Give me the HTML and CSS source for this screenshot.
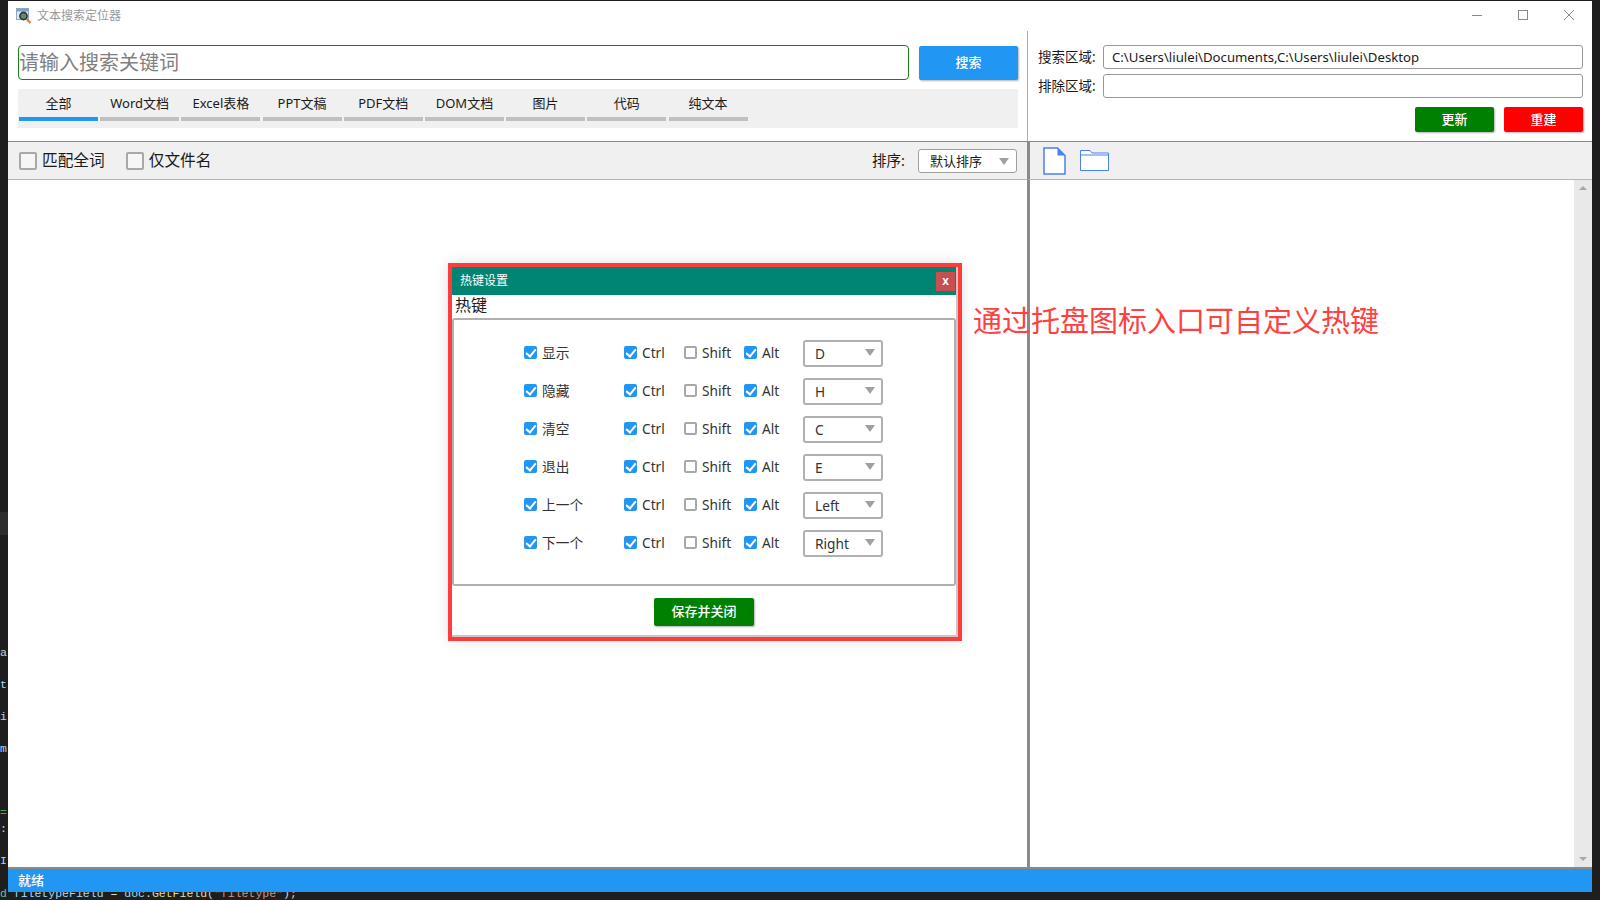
FILE: index.html
```html
<!DOCTYPE html>
<html lang="zh-CN">
<head>
    <meta charset="UTF-8">
    <meta name="viewport" content="width=device-width, initial-scale=1.0">
    <title>文本搜索定位器</title>
    <link rel="stylesheet" href="styles.css">
</head>
<body>
  <!-- editor behind the window -->
  <pre class="editor-edge"><span class="c-light">a</span>

<span class="c-blue">t</span>

<span class="c-blue">i</span>

<span class="c-blue">m</span>



<span class="c-green">=</span>
<span class="c-light">:</span>

<span class="c-blue">I</span></pre>
  <div class="editor-band"></div>
  <pre class="editor-line"><span class="c-teal">d</span> <span class="c-blue">filetypeField</span> <span class="c-light">=</span> <span class="c-blue">doc</span><span class="c-light">.</span><span class="c-yellow">GetField</span><span class="c-light">(</span><span class="c-orange">"filetype"</span><span class="c-light">);</span></pre>

  <div class="window">
    <div class="titlebar">
      <svg class="app-icon" width="16" height="16" viewBox="0 0 16 16">
        <rect x="0.5" y="0.5" width="12" height="11" fill="#dfe9f2" stroke="#8fa9c0"/>
        <rect x="0.5" y="0.5" width="12" height="3" fill="#7fa6c9"/>
        <circle cx="7.5" cy="8" r="3.6" fill="#5a8a78" stroke="#333" stroke-width="1.6"/>
        <path d="M10.5 11 L14.5 15" stroke="#e8772e" stroke-width="2.2"/>
      </svg>
      <span class="title-text">文本搜索定位器</span>
      <div class="win-controls">
        <svg width="12" height="12" viewBox="0 0 12 12"><path d="M1 6.5H11" stroke="#8a8a8a"/></svg>
        <svg width="12" height="12" viewBox="0 0 12 12"><rect x="1.5" y="1.5" width="9" height="9" fill="none" stroke="#8a8a8a"/></svg>
        <svg width="12" height="12" viewBox="0 0 12 12"><path d="M1 1L11 11M11 1L1 11" stroke="#8a8a8a"/></svg>
      </div>
    </div>

    <div class="panels">
      <div class="left-panel">
        <div class="left-head">
          <div class="search-row">
            <input class="search-input" type="text" placeholder="请输入搜索关键词">
            <button class="btn btn-blue search-btn">搜索</button>
          </div>
          <div class="tabs">
            <div class="tab active">全部</div>
            <div class="tab">Word文档</div>
            <div class="tab">Excel表格</div>
            <div class="tab">PPT文稿</div>
            <div class="tab">PDF文档</div>
            <div class="tab">DOM文档</div>
            <div class="tab">图片</div>
            <div class="tab">代码</div>
            <div class="tab">纯文本</div>
          </div>
        </div>
        <div class="toolbar">
          <label class="big-check"><input type="checkbox"><span>匹配全词</span></label>
          <label class="big-check"><input type="checkbox"><span>仅文件名</span></label>
          <span class="sort-label">排序:</span>
          <div class="sort-select"><span>默认排序</span></div>
        </div>
        <div class="results"></div>
      </div>

      <div class="right-panel">
        <div class="right-head">
          <div class="area-grid">
            <label>搜索区域:</label>
            <input class="area-input" type="text" value="C:\Users\liulei\Documents,C:\Users\liulei\Desktop">
            <label>排除区域:</label>
            <input class="area-input" type="text">
          </div>
          <div class="action-row">
            <button class="btn btn-green">更新</button>
            <button class="btn btn-red">重建</button>
          </div>
        </div>
        <div class="toolbar preview-bar">
          <svg width="23" height="28" viewBox="0 0 23 28">
            <path d="M1 1H14.5L22 8.5V27H1Z" fill="#fff" stroke="#4a80f0" stroke-width="1.5"/>
            <path d="M14.5 1V8.5H22Z" fill="#4a80f0"/>
          </svg>
          <svg width="29" height="21" viewBox="0 0 29 21">
            <path d="M0.5 20.5V0.5H10L12 3H28.5V20.5Z M0.5 5H28.5" fill="#fff" stroke="#4a80f0"/>
          </svg>
        </div>
        <div class="preview">
          <div class="preview-text"></div>
          <div class="scrollbar">
            <i class="arrow-up"></i>
            <i class="arrow-down"></i>
          </div>
        </div>
      </div>
    </div>

    <div class="statusbar">就绪</div>

    <!-- hotkey dialog, with the red frame around it -->
    <div class="dialog-frame">
      <div class="dialog">
        <div class="dialog-title">
          <span>热键设置</span>
          <div class="dialog-close">x</div>
        </div>
        <div class="group-label">热键</div>
        <div class="group-box">
          <div class="hotkey-row">
            <label class="hk-check"><input type="checkbox" checked>显示</label>
            <label class="hk-check"><input type="checkbox" checked>Ctrl</label>
            <label class="hk-check"><input type="checkbox">Shift</label>
            <label class="hk-check"><input type="checkbox" checked>Alt</label>
            <div class="combo"><span>D</span></div>
          </div>
          <div class="hotkey-row">
            <label class="hk-check"><input type="checkbox" checked>隐藏</label>
            <label class="hk-check"><input type="checkbox" checked>Ctrl</label>
            <label class="hk-check"><input type="checkbox">Shift</label>
            <label class="hk-check"><input type="checkbox" checked>Alt</label>
            <div class="combo"><span>H</span></div>
          </div>
          <div class="hotkey-row">
            <label class="hk-check"><input type="checkbox" checked>清空</label>
            <label class="hk-check"><input type="checkbox" checked>Ctrl</label>
            <label class="hk-check"><input type="checkbox">Shift</label>
            <label class="hk-check"><input type="checkbox" checked>Alt</label>
            <div class="combo"><span>C</span></div>
          </div>
          <div class="hotkey-row">
            <label class="hk-check"><input type="checkbox" checked>退出</label>
            <label class="hk-check"><input type="checkbox" checked>Ctrl</label>
            <label class="hk-check"><input type="checkbox">Shift</label>
            <label class="hk-check"><input type="checkbox" checked>Alt</label>
            <div class="combo"><span>E</span></div>
          </div>
          <div class="hotkey-row">
            <label class="hk-check"><input type="checkbox" checked>上一个</label>
            <label class="hk-check"><input type="checkbox" checked>Ctrl</label>
            <label class="hk-check"><input type="checkbox">Shift</label>
            <label class="hk-check"><input type="checkbox" checked>Alt</label>
            <div class="combo"><span>Left</span></div>
          </div>
          <div class="hotkey-row">
            <label class="hk-check"><input type="checkbox" checked>下一个</label>
            <label class="hk-check"><input type="checkbox" checked>Ctrl</label>
            <label class="hk-check"><input type="checkbox">Shift</label>
            <label class="hk-check"><input type="checkbox" checked>Alt</label>
            <div class="combo"><span>Right</span></div>
          </div>
        </div>
        <div class="dialog-foot">
          <button class="btn btn-green save-btn">保存并关闭</button>
        </div>
      </div>
    </div>

    <div class="annotation">通过托盘图标入口可自定义热键</div>
  </div>
</body>
</html>
```

FILE: styles.css
```css
* {
    box-sizing: border-box;
}

body {
    margin: 0;
    height: 900px;
    overflow: hidden;
    background-color: #1e1e1e;
    font-family: "Noto Sans", "Noto Sans CJK SC", sans-serif;
    color: #1a1a1a;
    position: relative;
}

/* editor peeking out around the window */
.editor-edge {
    position: absolute;
    left: 0;
    top: 645px;
    width: 8px;
    margin: 0;
    overflow: hidden;
    font: 11.5px/16px "Liberation Mono", monospace;
}

.editor-band {
    position: absolute;
    left: 0;
    top: 512px;
    width: 8px;
    height: 23px;
    background-color: #2d2d2d;
}

.editor-line {
    position: absolute;
    left: 0;
    top: 886px;
    margin: 0;
    font: 11.5px/16px "Liberation Mono", monospace;
}

.c-light { color: #d4d4d4; }
.c-blue { color: #9cdcfe; }
.c-green { color: #4ea84e; }
.c-teal { color: #4ec9b0; }
.c-yellow { color: #dcdcaa; }
.c-orange { color: #ce9178; }

.window {
    position: relative;
    z-index: 1;
    width: 1584px;
    height: 891px;
    margin: 1px 8px 0;
    background-color: #ffffff;
    display: flex;
    flex-direction: column;
}

/* title bar */
.titlebar {
    height: 30px;
    padding: 0 0 2px 8px;
    display: flex;
    align-items: center;
    flex: none;
}

.app-icon {
    margin-top: 1px;
}

.title-text {
    margin-left: 5px;
    font-size: 12px;
    color: #999999;
}

.win-controls {
    margin-left: auto;
    margin-right: 17px;
    display: flex;
    gap: 34px;
}

.panels {
    flex: 1;
    display: flex;
    min-height: 0;
}

.left-panel {
    width: 1019px;
    display: flex;
    flex-direction: column;
}

.left-head {
    height: 110px;
    padding: 14px 9px 0 10px;
}

.search-row {
    display: flex;
    align-items: center;
    gap: 10px;
}

.search-input {
    width: 891px;
    height: 35px;
    padding: 0;
    border: 1px solid #1a7f1a;
    border-radius: 4px;
    outline: none;
    font-family: inherit;
    font-size: 20px;
}

.search-input::placeholder {
    color: #808080;
    opacity: 1;
}

.btn {
    border: none;
    border-radius: 2px;
    color: #ffffff;
    font-family: inherit;
    font-size: 13px;
    font-weight: 500;
    padding: 0 0 2px;
    box-shadow: 1px 1px 2px rgba(0, 0, 0, 0.3);
}

.btn-blue { background-color: #2196f3; }
.btn-green { background-color: #008000; }
.btn-red { background-color: #ff0000; }

.search-btn {
    width: 99px;
    height: 34px;
}

.tabs {
    height: 39px;
    margin-top: 9px;
    padding-left: 1px;
    background-color: #f0f0f0;
    display: flex;
    gap: 2.2px;
}

.tab {
    width: 79px;
    height: 32px;
    padding-top: 3px;
    border-bottom: 4px solid #c0c0c0;
    font-size: 13px;
    line-height: 22px;
    text-align: center;
}

.tab.active {
    border-bottom-color: #2196f3;
}

/* the bar under the heads */
.toolbar {
    height: 39px;
    flex: none;
    display: flex;
    align-items: center;
    padding: 0 10px 0 11px;
    background-color: #f0f0f0;
    border-top: 1px solid #8a8a8a;
    border-bottom: 1px solid #b5b5b5;
}

.big-check {
    display: flex;
    align-items: center;
    gap: 5px;
    margin-right: 21px;
    font-size: 15.7px;
}

.big-check span {
    margin-top: -3px;
}

.big-check input {
    appearance: none;
    width: 18px;
    height: 18px;
    margin: 0;
    background-color: #f6f6f6;
    border: 2px solid #a8a8a8;
    border-radius: 2px;
}

.sort-label {
    margin-left: auto;
    margin-right: 13px;
    margin-top: -2px;
    font-size: 14.5px;
}

.sort-select {
    width: 99px;
    height: 24px;
    padding: 0 7px 0 11px;
    background-color: #ffffff;
    border: 1px solid #a0a0a0;
    border-radius: 3px;
    font-size: 13px;
    display: flex;
    align-items: center;
    justify-content: space-between;
}

.sort-select::after,
.combo::after {
    content: "";
    border-left: 5px solid transparent;
    border-right: 5px solid transparent;
    border-top: 7px solid #a0a0a0;
}

.sort-select::after {
    margin-top: 2px;
}

.results {
    flex: 1;
}

.right-panel {
    flex: 1;
    display: flex;
    flex-direction: column;
}

.right-head {
    height: 110px;
    padding: 14px 9px 0 10px;
    border-left: 1px solid #b0b0b0;
}

.area-grid {
    display: grid;
    grid-template-columns: 65px 1fr;
    row-gap: 5px;
    align-items: center;
    font-size: 13.5px;
}

.area-grid label {
    margin-top: -2px;
}

.area-input {
    height: 24px;
    padding: 0 8px;
    border: 1px solid #999999;
    border-radius: 3px;
    outline: none;
    font-family: inherit;
    font-size: 13.2px;
    color: #1a1a1a;
}

.action-row {
    margin-top: 9px;
    display: flex;
    justify-content: flex-end;
    gap: 10px;
}

.action-row .btn {
    width: 79px;
    height: 25px;
}

.preview-bar {
    padding-left: 13px;
    gap: 14px;
    border-left: 3px solid #8a8a8a;
}

.preview {
    flex: 1;
    display: flex;
    border-left: 3px solid #8a8a8a;
}

.preview-text {
    flex: 1;
}

.scrollbar {
    width: 18px;
    padding: 6px 0;
    background-color: #e9e9e9;
    display: flex;
    flex-direction: column;
    justify-content: space-between;
    align-items: center;
}

.arrow-up {
    border-left: 4px solid transparent;
    border-right: 4px solid transparent;
    border-bottom: 4px solid #a8a8a8;
}

.arrow-down {
    border-left: 4px solid transparent;
    border-right: 4px solid transparent;
    border-top: 4px solid #a8a8a8;
}

.statusbar {
    height: 25px;
    flex: none;
    padding-left: 10px;
    background-color: #2196f3;
    border-top: 2px solid #8a8a8a;
    color: #ffffff;
    font-size: 13px;
    font-weight: 500;
    line-height: 23px;
}

/* dialog */
.dialog-frame {
    position: absolute;
    left: 440px;
    top: 262px;
    width: 514px;
    height: 378px;
    border: 4px solid #ff3b3b;
    box-shadow: 0 0 14px rgba(0, 0, 0, 0.12);
}

.dialog {
    height: 100%;
    background-color: #ffffff;
    border-right: 2px solid #c8c8c8;
    border-bottom: 2px solid #c8c8c8;
}

.dialog-title {
    height: 28px;
    padding: 0 1px 2px 8px;
    background-color: #008573;
    color: #ffffff;
    font-size: 12px;
    display: flex;
    align-items: center;
    justify-content: space-between;
}

.dialog-close {
    width: 19px;
    height: 19px;
    margin-top: 3px;
    background-color: #c84f50;
    font-family: "Liberation Sans", sans-serif;
    font-weight: 700;
    line-height: 18px;
    text-align: center;
}

.group-label {
    height: 23px;
    padding-left: 3px;
    font-size: 16px;
    line-height: 21px;
}

.group-box {
    height: 268px;
    padding: 14px 0 0 70px;
    border: 2px solid #b0b0b0;
    border-radius: 3px;
}

.hotkey-row {
    height: 38px;
    display: grid;
    grid-template-columns: 100px 60px 60px 59px 80px;
    align-items: center;
    font-size: 13.7px;
    color: #333333;
}

.hk-check {
    display: flex;
    align-items: center;
    gap: 5px;
    margin-top: -2px;
}

.hk-check input {
    appearance: none;
    position: relative;
    width: 13px;
    height: 13px;
    margin: 1px 0 0;
    background-color: #ffffff;
    border: 2px solid #a8a8a8;
    border-radius: 2px;
}

.hk-check input:checked {
    background-color: #2196f3;
    border-color: #2196f3;
}

.hk-check input:checked::after {
    content: "";
    position: absolute;
    left: 2px;
    top: -1px;
    width: 4px;
    height: 8px;
    border-right: 2px solid #ffffff;
    border-bottom: 2px solid #ffffff;
    transform: rotate(40deg);
}

.combo {
    height: 27px;
    margin-top: 1px;
    padding: 0 6px 0 10px;
    border: 2px solid #b0b0b0;
    border-radius: 3px;
    display: flex;
    align-items: center;
    justify-content: space-between;
}

.combo::after {
    margin-top: -3px;
}

.dialog-foot {
    margin-top: 12px;
    display: flex;
    justify-content: center;
}

.save-btn {
    width: 100px;
    height: 28px;
    padding-bottom: 4px;
}

.annotation {
    position: absolute;
    left: 965px;
    top: 300px;
    font-size: 29px;
    line-height: 40px;
    color: #ff4040;
    white-space: nowrap;
}
```
